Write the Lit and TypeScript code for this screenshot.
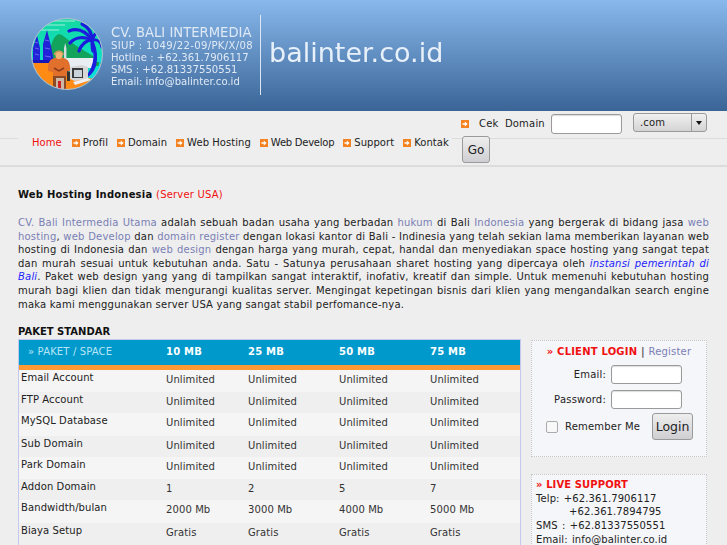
import { LitElement, html, css, svg } from "lit";
import { customElement } from "lit/decorators.js";

const arrow = html`<svg class="arrow" viewBox="0 0 8 8" width="8" height="8"><rect width="8" height="8" fill="#f58220"/><path d="M1.5 3.2h2.3V1.6L6.6 4 3.8 6.4V4.8H1.5z" fill="#fff"/></svg>`;

const logo = svg`
<defs>
  <clipPath id="c"><circle cx="36" cy="36" r="35.5"/></clipPath>
  <linearGradient id="sky" x1="0" y1="0" x2="0" y2="1"><stop offset="0" stop-color="#14d8a0"/><stop offset="1" stop-color="#08e4e0"/></linearGradient>
</defs>
<g clip-path="url(#c)">
  <rect width="72" height="72" fill="url(#sky)"/>
  <path d="M18 3h26M12 7h22M6 12h22" stroke="#c8f4e8" stroke-width=".8"/>
  <path d="M14 44 L22 22 Q26 14 31 17 L44 27 L62 38 L64 46z" fill="#12a45c"/>
  <path d="M0 44h72v4H0z" fill="#16a050"/>
  <path d="M30 40h34v10H30z" fill="#e8eef2"/>
  <path d="M2 44V30L6 17l3 13v14zM12 44V26l4-14 4 16 3 16z" fill="#2222d8"/>
  <path d="M4 24l3 1M4 30l4 1M4 36l4 1M14 22l4 1M14 30l5 1M14 38l6 1" stroke="#7a7af0" stroke-width=".8"/>
  <rect x="0" y="42" width="25" height="3" fill="#1818b8"/>
  <path d="M33 42V30l1.2-5 1.2 5v12z" fill="#d4dce0"/>
  <path d="M0 45h36v27H0zM36 60h36v12H36z" fill="#ff8a14"/>
  <path d="M60 24 Q65 38 60 50 Q56 58 50 63 Q62 58 65 48 Q68 36 63 24z" fill="#1c1cdc"/>
  <path d="M68 32 Q71 44 64 56 L56 64 Q68 56 70 44z" fill="#06d8ee"/>
  <g fill="none" stroke="#1c1cdc" stroke-width="3.2" stroke-linecap="round">
    <path d="M61 22 C54 12 46 10 38 13"/>
    <path d="M61 22 C53 18 44 19 39 25"/>
    <path d="M61 22 C55 22 50 27 48 33"/>
    <path d="M61 22 C61 15 57 9 51 6"/>
    <path d="M61 22 C64 15 67 12 70 12"/>
    <path d="M61 22 C66 21 70 24 71 29"/>
    <path d="M61 22 C61 26 61 30 62 33"/>
  </g>
  <path d="M17 50q0-7 4-9l5-2h4l5 2q4 2 4 9v3l-3 1v4H22v-4l-5-1z" fill="#e0702c"/>
  <path d="M23 35q4-5 9-1l1 3H23z" fill="#c09a5c"/>
  <ellipse cx="28" cy="37.500" rx="3.500" ry="3.500" fill="#f2b474"/>
  <path d="M23 50l5 3 5-3" stroke="#8a3a1c" stroke-width="1.500" fill="none"/>
  <rect x="22" y="58" width="13" height="14" fill="#8a4a28"/>
  <rect x="25" y="60" width="8" height="12" fill="#cdb8a6"/>
  <rect x="27" y="63" width="3" height="9" fill="#cc2020"/>
  <path d="M39 49l12-2 6 2v12l-13 2-5-2z" fill="#d6d6d6"/>
  <rect x="41" y="50" width="11" height="10" fill="#3a3a3a"/>
  <rect x="43" y="52" width="8" height="7" fill="#cad2da"/>
  <path d="M42 64l15-4 3 2-16 5z" fill="#eeeeee"/>
  <path d="M36 53l3 1v9h-3z" fill="#333"/>
</g>
<circle cx="36" cy="36" r="35.500" fill="none" stroke="#b4c2d2" stroke-width="1"/>`;

const rows: string[][] = [
  ["Email Account", "Unlimited", "Unlimited", "Unlimited", "Unlimited"],
  ["FTP Account", "Unlimited", "Unlimited", "Unlimited", "Unlimited"],
  ["MySQL Database", "Unlimited", "Unlimited", "Unlimited", "Unlimited"],
  ["Sub Domain", "Unlimited", "Unlimited", "Unlimited", "Unlimited"],
  ["Park Domain", "Unlimited", "Unlimited", "Unlimited", "Unlimited"],
  ["Addon Domain", "1", "2", "5", "7"],
  ["Bandwidth/bulan", "2000 Mb", "3000 Mb", "4000 Mb", "5000 Mb"],
  ["Biaya Setup", "Gratis", "Gratis", "Gratis", "Gratis"],
];

@customElement("app-root")
export class AppRoot extends LitElement {
  static styles = css`
    :host {
      display: block;
      width: 727px;
      height: 545px;
      overflow: hidden;
      background: #eeeeee;
      font-family: "DejaVu Sans", Verdana, sans-serif;
      font-size: 10px;
      letter-spacing: 0.2px;
      color: #222;
    }
    a { color: #7a7fb5; text-decoration: none; }
    .banner {
      height: 111px;
      background: linear-gradient(#88b8ec, #3a6496);
      display: flex;
      box-sizing: border-box;
      padding: 15px 0 0 31px;
    }
    .logo { width: 72px; height: 72px; margin-top: 3px; flex: none; filter: blur(0.4px); }
    .info {
      margin-left: 8px;
      padding-top: 11px;
      width: 149px;
      flex: none;
      color: #dfe9f5;
      font-size: 10.1px;
      letter-spacing: 0;
      line-height: 12px;
      filter: blur(0.3px);
      white-space: nowrap;
    }
    .info .name { font-size: 13.2px; line-height: 14px; display: block; }
    .info .siup { letter-spacing: 0.33px; }
    .divider { width: 1px; height: 80px; background: #dde7f2; flex: none; }
    .site { margin: 20px 0 0 8px; color: #e8f0f9; font-size: 27px; letter-spacing: 0; line-height: 36px; filter: blur(0.3px); }

    .bar { height: 54px; border-bottom: 2px solid #dcdcdc; }
    .check {
      height: 25px;
      display: flex;
      align-items: center;
      padding-left: 461px;
      word-spacing: 3px;
    }
    .check .arrow { margin-right: 10px; }
    .check input { margin-left: 6px; }
    .field {
      box-sizing: border-box;
      width: 71px;
      height: 20px;
      border: 1px solid #9a9a9a;
      border-radius: 3px;
      background: #fff;
      box-shadow: inset 0 1px 1px #ddd;
      padding: 0;
    }
    .select {
      box-sizing: border-box;
      width: 74px;
      height: 19px;
      margin: -2px 0 0 11px;
      border: 1px solid #9a9a9a;
      border-radius: 3px;
      background: linear-gradient(#f0f0f0, #d4d4d6);
      display: flex;
      align-items: center;
      padding-left: 6px;
    }
    .select span { flex: 1; word-spacing: 0; }
    .select i {
      width: 14px;
      height: 17px;
      border-left: 1px solid #9a9a9a;
      display: flex;
      align-items: center;
      justify-content: center;
    }
    .select i::after { content: ""; border: 3.5px solid transparent; border-top: 4px solid #111; border-bottom: 0; }
    .navrow {
      height: 29px;
      display: flex;
      align-items: flex-start;
      background: linear-gradient(#dcdcdc, #dcdcdc) 0 2px / 100% 1px no-repeat;
    }
    nav {
      margin-left: 18px;
      width: 434px;
      height: 26px;
      background: #eee;
      box-sizing: border-box;
      padding: 0 0 0 14px;
      display: flex;
      align-items: flex-start;
      white-space: nowrap;
      line-height: 13px;
      letter-spacing: 0.05px;
    }
    nav a { color: #222; }
    nav a.on { color: #f01010; }
    nav .item { display: flex; align-items: center; margin-right: 9px; }
    nav .item .arrow { margin-right: 3px; }
    nav .item.tight a { letter-spacing: -0.25px; }
    nav .first { margin-right: 10px; }
    .btn {
      box-sizing: border-box;
      border: 1px solid #9a9a9a;
      border-radius: 3px;
      background: linear-gradient(#eeeeee, #cfcfd3);
      font-family: inherit;
      color: #222;
      padding: 0;
    }
    .go { width: 28px; height: 27px; margin-left: 10px; font-size: 12px; }

    main { padding: 0 18px; }
    h1 { margin: 21px 0 0; font-size: 10px; line-height: 14px; font-weight: bold; color: #111; }
    h1 span { font-weight: normal; color: #f01010; }
    .intro {
      margin: 14px 0 0;
      line-height: 13.6px;
      text-align: justify;
      color: #222;
    }
    .intro em { color: #2222ff; }
    .cols { display: flex; margin-top: 14px; }
    .left { width: 503px; flex: none; }
    h2 { margin: 0; font-size: 10px; letter-spacing: 0; line-height: 14px; font-weight: bold; color: #111; }
    .table { border: 1px solid #c4c8ee; border-bottom: 0; height: 300px; box-sizing: border-box; }
    .row { display: grid; grid-template-columns: 147px 82px 91px 91px 1fr; }
    .head {
      background: #0099cc;
      border-bottom: 5px solid #ff9933;
      align-items: center;
      color: #fff;
      font-weight: bold;
      padding-bottom: 2px;
      height: 23px;
    }
    .head div:first-child { padding-left: 9px; font-weight: normal; color: #b8e6f6; letter-spacing: 0.15px; }
    .body .row { background: #f5f5f5; height: 22px; }
    .body .row:nth-child(even) { background: #efefef; height: 21px; }
    .body .row:nth-child(4n + 3) { height: 23px; }
    .body .row div { padding-top: 3px; line-height: 13px; color: #333; letter-spacing: 0.1px; }
    .body .row div:first-child { padding: 1px 0 0 2px; color: #222; }
    .right { margin-left: 10px; width: 176px; flex: none; padding-top: 15px; }
    .box { border: 1px dotted #c8c8c8; background: #f5f6f9; box-sizing: border-box; }
    .login { height: 117px; padding-top: 4px; }
    .ttl { text-align: center; line-height: 14px; color: #555; font-weight: bold; }
    .red { color: #f01010; font-weight: bold; }
    .ttl a { font-weight: normal; }
    .frow { display: flex; align-items: center; justify-content: flex-end; padding-right: 24px; margin-top: 6px; color: #222; }
    .frow label { margin-right: 5px; }
    .frow .field { width: 71px; height: 19px; }
    .frow2 { display: flex; align-items: center; padding-left: 14px; margin-top: 4px; }
    .check-box { width: 12px; height: 12px; box-sizing: border-box; border: 1px solid #aaa; border-radius: 2px; background: #f8f8f8; margin-right: 7px; }
    .login-btn { width: 41px; height: 27px; margin-left: 12px; font-size: 12.5px; letter-spacing: 0; }
    .support { margin-top: 17px; height: 100px; padding: 3px 4px; line-height: 13.6px; color: #222; white-space: nowrap; word-spacing: 1px; letter-spacing: 0.1px; }
    .support .red { word-spacing: 0; }
    .support .indent { display: block; padding-left: 33px; }
  `;

  render() {
    return html`
      <div class="banner">
        <svg class="logo" viewBox="0 0 72 72">${logo}</svg>
        <div class="info">
          <span class="name">CV. BALI INTERMEDIA</span>
          <span class="siup">SIUP : 1049/22-09/PK/X/08</span><br />
          Hotline : +62.361.7906117<br />
          SMS : +62.81337550551<br />
          Email: info@balinter.co.id
        </div>
        <div class="divider"></div>
        <div class="site">balinter.co.id</div>
      </div>
      <div class="bar">
        <div class="check">
          ${arrow}<span>Cek Domain</span><input class="field" />
          <div class="select"><span>.com</span><i></i></div>
        </div>
        <div class="navrow">
          <nav>
            <a class="on first" href="#">Home</a>
            ${["Profil", "Domain", "Web Hosting", "Web Develop", "Support", "Kontak"].map(
              (t) => html`<div class="item ${t === "Web Develop" ? "tight" : ""}">${arrow}<a href="#">${t}</a></div>`
            )}
          </nav>
          <button class="btn go">Go</button>
        </div>
      </div>
      <main>
        <h1>Web Hosting Indonesia <span>(Server USA)</span></h1>
        <p class="intro">
          <a href="#">CV. Bali Intermedia Utama</a> adalah sebuah badan usaha yang berbadan
          <a href="#">hukum</a> di Bali <a href="#">Indonesia</a> yang bergerak di bidang jasa
          <a href="#">web hosting</a>, <a href="#">web Develop</a> dan
          <a href="#">domain register</a> dengan lokasi kantor di Bali - Indinesia yang telah
          sekian lama memberikan layanan web hosting di Indonesia dan
          <a href="#">web design</a> dengan harga yang murah, cepat, handal dan menyediakan space
          hosting yang sangat tepat dan murah sesuai untuk kebutuhan anda. Satu - Satunya
          perusahaan sharet hosting yang dipercaya oleh <em>instansi pemerintah di Bali</em>.
          Paket web design yang yang di tampilkan sangat interaktif, inofativ, kreatif dan simple.
          Untuk memenuhi kebutuhan hosting murah bagi klien dan tidak mengurangi kualitas server.
          Mengingat kepetingan bisnis dari klien yang mengandalkan search engine maka kami
          menggunakan server USA yang sangat stabil perfomance-nya.
        </p>
        <div class="cols">
          <div class="left">
            <h2>PAKET STANDAR</h2>
            <div class="table">
              <div class="row head">
                <div>» PAKET / SPACE</div><div>10 MB</div><div>25 MB</div><div>50 MB</div><div>75 MB</div>
              </div>
              <div class="body">
                ${rows.map((r) => html`<div class="row">${r.map((c) => html`<div>${c}</div>`)}</div>`)}
              </div>
            </div>
          </div>
          <div class="right">
            <div class="box login">
              <div class="ttl"><span class="red">» CLIENT LOGIN</span> | <a href="#">Register</a></div>
              <div class="frow"><label>Email:</label><input class="field" /></div>
              <div class="frow"><label>Password:</label><input class="field" /></div>
              <div class="frow2"><div class="check-box"></div>Remember Me<button class="btn login-btn">Login</button></div>
            </div>
            <div class="box support">
              <span class="red">» LIVE SUPPORT</span><br />
              Telp: +62.361.7906117
              <span class="indent">+62.361.7894795</span>
              SMS : +62.81337550551<br />
              Email: info@balinter.co.id
            </div>
          </div>
        </div>
      </main>
    `;
  }
}
